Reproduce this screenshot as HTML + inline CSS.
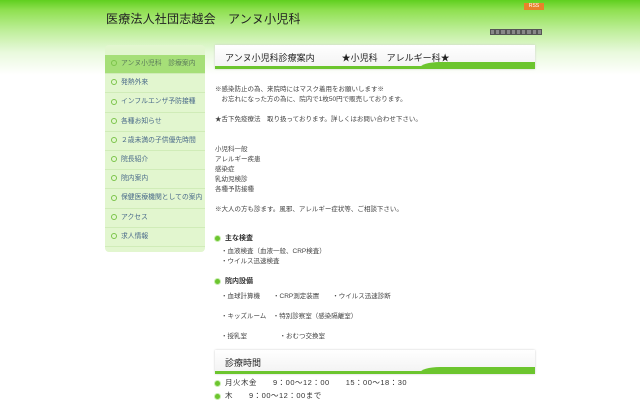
<!DOCTYPE html>
<html><head><meta charset="utf-8"><style>
*{margin:0;padding:0;box-sizing:border-box}
body{width:640px;height:400px;overflow:hidden;background:#fff;font-family:"Liberation Sans","Noto Sans CJK JP",sans-serif;color:#333;position:relative}
.hdr{position:absolute;left:0;top:0;width:640px;height:75px;background:linear-gradient(#5fcf1e 0,#8fe050 10px,#bdee98 30px,#e8f9dc 52px,#fff 75px)}
.t{position:absolute;left:106px;top:10px;font-size:12px;color:#222;letter-spacing:.2px}
.rss{position:absolute;left:524px;top:3px;width:20px;height:7px;background:#e8832a;color:#fff;font-size:5px;text-align:center;line-height:7px}
.cnt{position:absolute;left:490px;top:29px;display:flex;gap:0}
.cnt span{width:5.2px;height:6px;background:#888;border:1px solid #555}
.side{position:absolute;left:105px;top:45px;width:100px;height:207px;background:#e2f6cf;border-radius:4px}
.nav{position:absolute;left:105px;top:55px;width:100px}
.nav div{height:19.2px;line-height:18px;font-size:6.8px;color:#4a6a8a;padding-left:6px;border-bottom:1px solid #d0ecb8;white-space:nowrap;overflow:hidden}
.nav div:before{content:"";display:inline-block;width:4px;height:4px;border:1px solid #7bc44a;border-radius:50%;margin-right:4px;vertical-align:middle}
.nav .a{background:#a6df78;color:#5a7a5a}
.box{position:absolute;left:215px;width:320px;height:24px;background:linear-gradient(#fff,#f2f2f2);box-shadow:0 0 2px #ccc}
.box:after{content:"";position:absolute;left:0;right:0;bottom:0;height:3px;background:#6cc52e}
.box .g{position:absolute;right:0;bottom:0;width:115px;height:7px;background:#6cc52e;border-top-left-radius:20px 6px}
.box span{position:absolute;left:10px;top:6px;font-size:9px;color:#222}
.p{position:absolute;left:215px;font-size:6.5px;color:#444;white-space:pre}
.i{left:221px}
.h{position:absolute;left:215px;font-size:7px;font-weight:bold;color:#333}
.h:before,.d:before{content:"";display:inline-block;width:5px;height:5px;background:#6cc52e;border-radius:50%;margin-right:5px;vertical-align:middle;box-shadow:0 0 0 1px #c8eeb0}
.d{position:absolute;left:215px;font-size:7.5px;color:#333;white-space:pre;letter-spacing:.5px}
</style></head><body>
<div class="hdr"></div>
<div class="t">医療法人社団志越会　アンヌ小児科</div>
<div class="rss">RSS</div>
<div class="cnt"><span></span><span></span><span></span><span></span><span></span><span></span><span></span><span></span><span></span><span></span></div>
<div class="side"></div>
<div class="nav">
<div class="a">アンヌ小児科　診療案内</div><div>発熱外来</div><div>インフルエンザ予防接種</div><div>各種お知らせ</div><div>２歳未満の子供優先時間</div><div>院長紹介</div><div>院内案内</div><div>保健医療機関としての案内</div><div>アクセス</div><div>求人情報</div>
</div>
<div class="box" style="top:45px"><div class="g"></div><span>アンヌ小児科診療案内　　　★小児科　アレルギー科★</span></div>
<div class="p" style="top:83px">※感染防止の為、来院時にはマスク着用をお願いします※</div>
<div class="p" style="top:93px">　お忘れになった方の為に、院内で1枚50円で販売しております。</div>
<div class="p" style="top:113px">★舌下免疫療法　取り扱っております。詳しくはお問い合わせ下さい。</div>
<div class="p" style="top:143px">小児科一般</div>
<div class="p" style="top:153px">アレルギー疾患</div>
<div class="p" style="top:163px">感染症</div>
<div class="p" style="top:173px">乳幼児検診</div>
<div class="p" style="top:183px">各種予防接種</div>
<div class="p" style="top:203px">※大人の方も診ます。風邪、アレルギー症状等、ご相談下さい。</div>
<div class="h" style="top:233px">主な検査</div>
<div class="p i" style="top:245px">・血液検査（血液一般、CRP検査）</div>
<div class="p i" style="top:255px">・ウイルス迅速検査</div>
<div class="h" style="top:276px">院内設備</div>
<div class="p i" style="top:290px">・血球計算機　　・CRP測定装置　　・ウイルス迅速診断</div>
<div class="p i" style="top:310px">・キッズルーム　・特別診察室（感染隔離室）</div>
<div class="p i" style="top:330px">・授乳室　　　　　・おむつ交換室</div>
<div class="box" style="top:350px"><div class="g"></div><span>診療時間</span></div>
<div class="d" style="top:377px">月火木金　　9：00～12：00　　15：00～18：30</div>
<div class="d" style="top:390px">木　　9：00～12：00まで</div>
</body></html>
